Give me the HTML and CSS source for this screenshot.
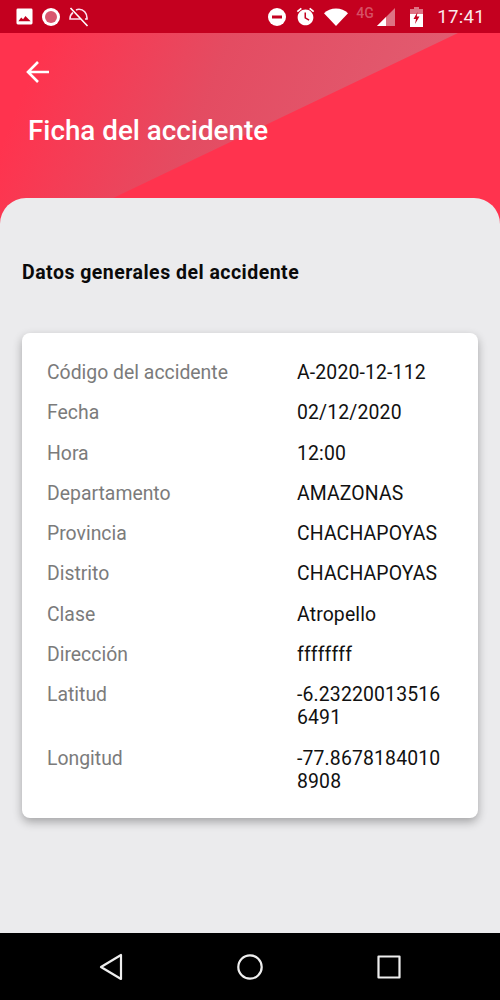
FILE: index.html
```html
<!DOCTYPE html>
<html lang="es">
<head>
<meta charset="utf-8">
<title>Ficha del accidente</title>
<link rel="stylesheet" href="styles.css">
</head>
<body>
<div class="app">
  <div class="status">
    <div class="status-group left">
      <svg class="i-image" viewBox="0 0 18 18"><rect x="0.5" y="0.5" width="17" height="17" rx="1.500" fill="#fff"/><path d="M2.500 14l3-4 2 2 2.500-3.500 5.500 5.500z" fill="#c4001f"/></svg>
      <svg class="i-rec" viewBox="0 0 18 18"><circle cx="9" cy="9" r="9" fill="#fff"/><circle cx="9" cy="9" r="6" fill="#d9566f"/></svg>
      <svg class="i-off" viewBox="0 0 20 20" fill="none" stroke="#fde" stroke-width="1.600"><path d="M4 5.500C2 7 1 9.500 1 12h10.500M7 3c1-.5 2-.7 3-.7 4.500 0 8 3.700 8 8.700v1h-2"/><path d="M1.500 1l17 18" stroke="#fff"/></svg>
    </div>
    <div class="status-group right">
      <svg class="i-dnd" viewBox="0 0 18 18"><circle cx="9" cy="9" r="9" fill="#fff"/><rect x="4" y="7.500" width="10" height="3" fill="#c4001f"/></svg>
      <svg class="i-alarm" viewBox="0 0 24 24"><path fill="#fff" d="M22 5.720l-4.600-3.860-1.290 1.530 4.600 3.860L22 5.720zM7.880 3.390L6.600 1.860 2 5.710l1.290 1.530 4.590-3.850zM12 4c-4.970 0-9 4.030-9 9s4.030 9 9 9 9-4.030 9-9-4.030-9-9-9z"/><path fill="none" stroke="#c4001f" stroke-width="1.700" d="M11.700 7.500v6l4.400 2.600"/></svg>
      <svg class="i-wifi" viewBox="0 0 24 18"><path d="M12 18L0 5.200C3 2.200 7.300.5 12 .5s9 1.700 12 4.700z" fill="#fff"/></svg>
      <span class="net">4G</span>
      <svg class="i-signal" viewBox="0 0 18 18"><path d="M18 0v18H0z" fill="#fff" fill-opacity=".45"/><path d="M9 9v9H0z" fill="#fff"/></svg>
      <svg class="i-batt" viewBox="0 0 13 20"><path d="M4 0h5v2h4v18H0V2h4z" fill="#fff" fill-opacity=".45"/><path d="M0 7h13v13H0z" fill="#fff"/><path d="M7.500 5L3.500 12h2.500l-1 5 4.500-7.500H6.800z" fill="#c4001f"/></svg>
      <span class="time">17:41</span>
    </div>
  </div>

  <div class="hero">
    <svg class="back" viewBox="0 0 24 24" fill="none" stroke="#fff" stroke-width="2.600"><path d="M23 12H3M12 2L2 12l10 10"/></svg>
    <h1 class="title">Ficha del accidente</h1>
  </div>

  <main class="sheet">
    <h2 class="heading">Datos generales del accidente</h2>
    <section class="card">
      <div class="row"><span class="label">Código del accidente</span><span class="value">A-2020-12-112</span></div>
      <div class="row"><span class="label">Fecha</span><span class="value">02/12/2020</span></div>
      <div class="row"><span class="label">Hora</span><span class="value">12:00</span></div>
      <div class="row"><span class="label">Departamento</span><span class="value">AMAZONAS</span></div>
      <div class="row"><span class="label">Provincia</span><span class="value">CHACHAPOYAS</span></div>
      <div class="row"><span class="label">Distrito</span><span class="value">CHACHAPOYAS</span></div>
      <div class="row"><span class="label">Clase</span><span class="value">Atropello</span></div>
      <div class="row"><span class="label">Dirección</span><span class="value">ffffffff</span></div>
      <div class="row"><span class="label">Latitud</span><span class="value">-6.232200135166491</span></div>
      <div class="row"><span class="label">Longitud</span><span class="value">-77.86781840108908</span></div>
    </section>
  </main>

  <nav class="navbar">
    <svg class="n-back" viewBox="0 0 24 28" fill="none" stroke="#eee" stroke-width="2.200" stroke-linejoin="round"><path d="M22 2v24L2 14z"/></svg>
    <svg class="n-home" viewBox="0 0 26 26" fill="none" stroke="#eee" stroke-width="2.200"><circle cx="13" cy="13" r="11.700"/></svg>
    <svg class="n-recent" viewBox="0 0 24 24" fill="none" stroke="#eee" stroke-width="2.200" stroke-linejoin="round"><rect x="1.500" y="1.500" width="21" height="21"/></svg>
  </nav>
</div>
</body>
</html>
```
FILE: styles.css
```css
* { box-sizing: border-box; }
html, body { margin: 0; padding: 0; }
body { font-family: Roboto, "Liberation Sans", sans-serif; }

.app {
  position: relative;
  width: 500px;
  height: 1000px;
  display: flex;
  flex-direction: column;
  overflow: hidden;
  background: #ff334e;
}
.app::before {
  content: "";
  position: absolute;
  left: 0;
  top: 33px;
  width: 500px;
  height: 200px;
  clip-path: polygon(0 0, 458px 0, 40px 200px, 0 200px);
  background: linear-gradient(112deg, rgba(190,110,125,0) 8%, rgba(190,110,125,.42) 40%, rgba(205,130,145,.62) 100%);
}

.status {
  position: relative;
  height: 33px;
  flex: none;
  display: flex;
  justify-content: space-between;
  align-items: center;
  padding: 0 15px 0 16px;
  background: #c4001f;
}
.status-group { display: flex; align-items: center; }
.i-image { width: 17px; height: 17px; }
.i-rec { width: 18px; height: 18px; margin-left: 9px; }
.i-off { width: 20px; height: 20px; margin-left: 9px; }
.i-dnd { width: 18px; height: 18px; }
.i-alarm { width: 21px; height: 21px; margin-left: 9px; }
.i-wifi { width: 24px; height: 18px; margin-left: 8px; }
.net {
  width: 19px;
  margin: -7px 0 0 8px;
  font-size: 14px;
  line-height: 14px;
  font-weight: 500;
  color: rgba(255,255,255,.32);
}
.i-signal { width: 18px; height: 18px; margin-left: 2px; }
.i-batt { width: 13px; height: 20px; margin-left: 15px; }
.time {
  margin-left: 14px;
  font-size: 18.600px;
  color: #fbeaec;
  letter-spacing: .3px;
}

.hero {
  position: relative;
  height: 165px;
  flex: none;
  padding: 27px 28px 0 26px;
}
.back { display: block; width: 24px; height: 24px; }
.title {
  margin: 30px 0 0 2px;
  font-size: 27.800px;
  line-height: 34px;
  font-weight: 500;
  color: #fff;
}

.sheet {
  position: relative;
  flex: 1;
  padding: 63px 22px 0;
  background: #ebebed;
  border-radius: 26px 26px 0 0;
}
.heading {
  margin: 0;
  font-size: 19.500px;
  line-height: 24px;
  font-weight: 700;
  color: #0a0a0a;
  letter-spacing: .48px;
}
.card {
  margin-top: 48px;
  padding: 28px 25px 25px;
  display: flex;
  flex-direction: column;
  gap: 17.300px;
  background: #fff;
  border-radius: 8px;
  box-shadow: 0 4px 10px rgba(0,0,0,.3);
}
.row {
  display: flex;
  font-size: 19.400px;
  line-height: 23px;
}
.label { width: 250px; flex: none; color: #7b7b7b; }
.value { width: 152px; flex: none; color: #111; word-break: break-all; letter-spacing: .15px; }

.navbar {
  position: relative;
  height: 67px;
  flex: none;
  display: flex;
  align-items: center;
  background: #000;
  padding: 0 0 0 99px;
}
.n-back { width: 24px; height: 28px; }
.n-home { width: 26px; height: 26px; margin-left: 114px; }
.n-recent { width: 24px; height: 24px; margin-left: 114px; }
```
